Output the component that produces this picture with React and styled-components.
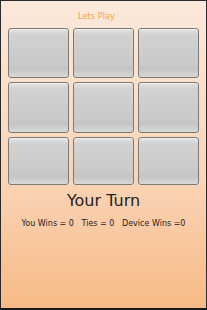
import React from "react";
import styled, { createGlobalStyle } from "styled-components";

const Global = createGlobalStyle`
  html, body { margin: 0; padding: 0; background: #000; }
  body { font-family: "DejaVu Sans", sans-serif; }
`;

const Screen = styled.div`
  box-sizing: border-box;
  width: 207px;
  height: 310px;
  border-top: 1px solid #2a2a2a;
  border-left: 1px solid #2a2a2a;
  border-right: 1px solid #2a2a2a;
  border-bottom: 2px solid #1a1a1a;
  background: linear-gradient(180deg, #fbe9dc 0%, #fad3b4 60%, #f7ba86 100%);
  display: flex;
  flex-direction: column;
  align-items: center;
`;

const Title = styled.div`
  margin-top: 9px;
  margin-right: 14px;
  height: 13px;
  font-size: 8.3px;
  line-height: 13px;
  color: #f3a53a;
`;

const Grid = styled.div`
  margin-top: 5px;
  display: grid;
  grid-template-columns: repeat(3, 61px);
  grid-template-rows: 50px 51px 48px;
  gap: 4px;
`;

const Cell = styled.button`
  box-sizing: border-box;
  padding: 0;
  border: 1px solid #7d7a76;
  border-radius: 3px;
  background: linear-gradient(180deg, #e4e4e4 0%, #d2d2d2 12%, #c9c9c9 75%, #c3c3c3 82%, #d9d9d9 100%);
  box-shadow: inset 0 1px 0 #f0f0f0;
`;

const Turn = styled.div`
  margin-top: 6px;
  font-size: 16px;
  line-height: 20px;
  color: #222;
`;

const Stats = styled.div`
  margin-top: 8px;
  font-size: 8px;
  line-height: 10px;
  color: #222;
  white-space: pre;
`;

export default function App() {
  return (
    <>
      <Global />
      <Screen>
        <Title>Lets Play</Title>
        <Grid>
          {Array.from({ length: 9 }).map((_, i) => (
            <Cell key={i} />
          ))}
        </Grid>
        <Turn>Your Turn</Turn>
        <Stats>{"You Wins = 0   Ties = 0   Device Wins =0"}</Stats>
      </Screen>
    </>
  );
}
